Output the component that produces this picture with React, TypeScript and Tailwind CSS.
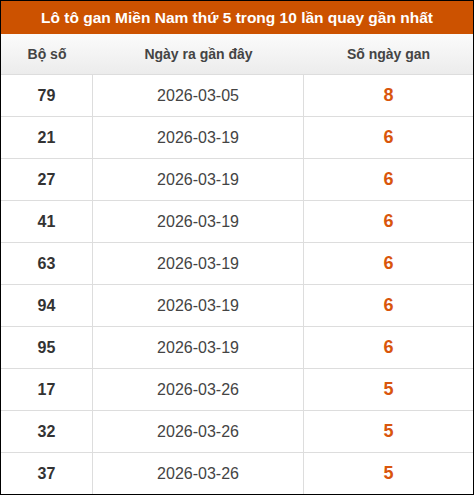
const rows = [
  { so: '79', ngay: '2026-03-05', gan: 8 },
  { so: '21', ngay: '2026-03-19', gan: 6 },
  { so: '27', ngay: '2026-03-19', gan: 6 },
  { so: '41', ngay: '2026-03-19', gan: 6 },
  { so: '63', ngay: '2026-03-19', gan: 6 },
  { so: '94', ngay: '2026-03-19', gan: 6 },
  { so: '95', ngay: '2026-03-19', gan: 6 },
  { so: '17', ngay: '2026-03-26', gan: 5 },
  { so: '32', ngay: '2026-03-26', gan: 5 },
  { so: '37', ngay: '2026-03-26', gan: 5 },
];

export default function App() {
  return (
    <div className="w-[474px] bg-white font-['Liberation_Sans',Arial,sans-serif]">
      <div className="border border-black">
        <div className="flex h-[33px] items-center justify-center bg-[#cc5200] text-[15.5px] font-bold text-white">
          Lô tô gan Miền Nam thứ 5 trong 10 lần quay gần nhất
        </div>
        <div className="grid h-[41px] grid-cols-[92px_211px_1fr] items-center border-b border-[#dddddd] bg-gradient-to-b from-[#fbfbfb] to-[#ececec] text-[14px] font-bold text-[#444]">
          <div className="text-center">Bộ số</div>
          <div className="text-center">Ngày ra gần đây</div>
          <div className="text-center">Số ngày gan</div>
        </div>
        {rows.map((r, i) => (
          <div
            key={r.so}
            className={
              i === rows.length - 1
                ? 'grid h-[41px] grid-cols-[92px_211px_1fr]'
                : 'grid h-[42px] grid-cols-[92px_211px_1fr] border-b border-[#dddddd]'
            }
          >
            <div className="flex items-center justify-center border-r border-[#dddddd] text-[16px] font-bold text-[#333]">
              {r.so}
            </div>
            <div className="flex items-center justify-center border-r border-[#dddddd] text-[16px] text-[#444]">
              {r.ngay}
            </div>
            <div className="flex items-center justify-center text-[18px] font-bold text-[#d9560c]">
              {r.gan}
            </div>
          </div>
        ))}
      </div>
    </div>
  );
}
